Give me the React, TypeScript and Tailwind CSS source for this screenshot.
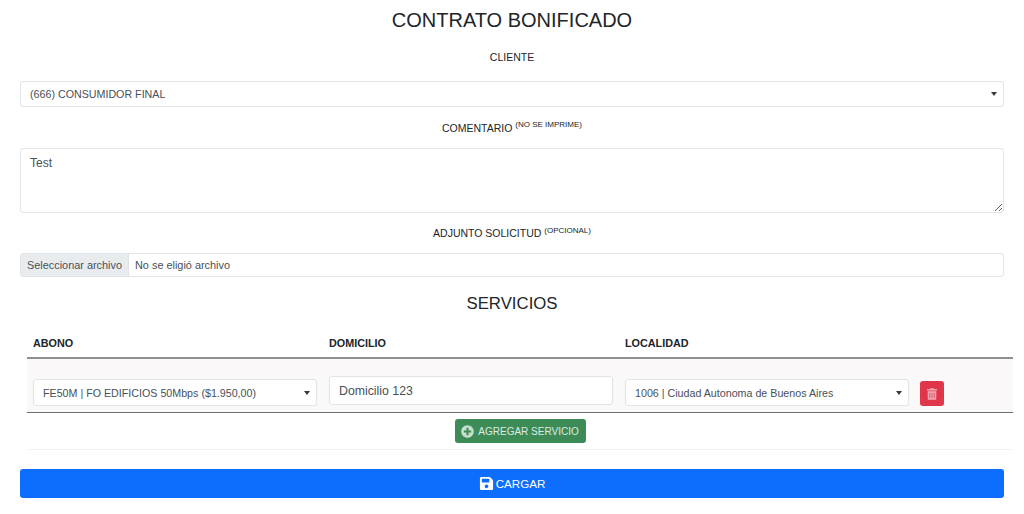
import { FC, ReactNode } from "react";
import { FaPlusCircle, FaSave, FaTrashAlt } from "react-icons/fa";

const SelectBox: FC<{ text: string; className: string }> = ({ text, className }) => (
  <div
    className={`flex items-center justify-between bg-white border border-[#e0e4e8] rounded-[3px] pl-[9px] pr-[6px] text-[10.7px] text-[#495057] ${className}`}
  >
    <span className="pt-[1px]">{text}</span>
    <svg width="6" height="4" viewBox="0 0 6 4" className="shrink-0">
      <path d="M0 0h6L3 4z" fill="#343a40" />
    </svg>
  </div>
);

const FieldLabel: FC<{ className: string; children: ReactNode }> = ({ className, children }) => (
  <div className={`flex items-center justify-center pt-[2px] text-[10.5px] text-[#212529] ${className}`}>
    <span>{children}</span>
  </div>
);

const Hint: FC<{ children: ReactNode }> = ({ children }) => (
  <sup className="relative top-0 align-super text-[8px]">{children}</sup>
);

export default function App() {
  return (
    <div className="w-[1024px] h-[514px] overflow-hidden bg-white px-[20px] text-[#212529] font-['Liberation_Sans',Arial,sans-serif]">
      <h1 className="h-[41px] flex items-center justify-center pb-[2px] text-[20px] text-[#212529]">
        CONTRATO BONIFICADO
      </h1>
      <FieldLabel className="h-[32px] mb-[8px]">CLIENTE</FieldLabel>
      <SelectBox text="(666) CONSUMIDOR FINAL" className="h-[26px]" />

      <FieldLabel className="h-[41px]">
        COMENTARIO <Hint>(NO SE IMPRIME)</Hint>
      </FieldLabel>
      <textarea
        defaultValue="Test"
        className="block w-full h-[65px] border border-[#e0e4e8] rounded-[3px] px-[9px] py-[5px] text-[12px] text-[#495057] outline-none"
      />

      <FieldLabel className="h-[40px]">
        ADJUNTO SOLICITUD <Hint>(OPCIONAL)</Hint>
      </FieldLabel>
      <div className="flex h-[24px] border border-[#e0e4e8] rounded-[3px] text-[10.9px] text-[#495057] overflow-hidden">
        <div className="w-[108px] flex items-center justify-center pt-[1px] bg-[#e9ecef] border-r border-[#e0e4e8]">
          Seleccionar archivo
        </div>
        <div className="flex items-center pt-[1px] pl-[6px]">No se eligió archivo</div>
      </div>

      <h2 className="h-[52px] flex items-center justify-center pt-[2px] text-[16.8px] text-[#212529]">
        SERVICIOS
      </h2>

      <div className="ml-[7px] mr-[-9px]">
        <div className="grid grid-cols-[296px_296px_1fr] h-[30px] items-center px-[6px] text-[10.8px] font-bold text-[#212529] border-b-2 border-[#8f8f8f]">
          <div>ABONO</div>
          <div>DOMICILIO</div>
          <div>LOCALIDAD</div>
        </div>
        <div className="grid grid-cols-[296px_296px_1fr] h-[54px] bg-[#faf8f9] px-[6px] border-b border-[#6e6e6e]">
          <div className="pt-[20px]">
            <SelectBox text="FE50M | FO EDIFICIOS 50Mbps ($1.950,00)" className="h-[27px] w-[284px]" />
          </div>
          <div className="pt-[17px]">
            <input
              defaultValue="Domicilio 123"
              className="block h-[29px] w-[284px] border border-[#e0e4e8] rounded-[3px] bg-white px-[9px] text-[12.3px] text-[#495057] outline-none"
            />
          </div>
          <div className="flex items-start gap-[11px] pt-[20px]">
            <SelectBox text="1006 | Ciudad Autonoma de Buenos Aires" className="h-[27px] w-[284px]" />
            <button className="mt-[2px] w-[24px] h-[25px] flex items-center justify-center rounded-[3px] bg-[#e0364c]">
              <FaTrashAlt className="w-[10px] h-[12px] text-[#f3a9b4]" />
            </button>
          </div>
        </div>
        <div className="h-[37px] flex items-start justify-center pt-[6px] border-b border-[#f2f2f2]">
          <button className="w-[131px] h-[24px] flex items-center justify-center gap-[4px] rounded-[3px] bg-[#3d8b57] text-[10px] text-[#dcebe1]">
            <FaPlusCircle className="w-[13px] h-[13px] text-[#c5dfcd]" />
            AGREGAR SERVICIO
          </button>
        </div>
      </div>

      <button className="mt-[19px] w-full h-[29px] flex items-center justify-center gap-[2px] rounded-[3px] bg-[#0d6efd] text-[11.6px] text-white">
        <FaSave className="w-[15px] h-[15px]" />
        CARGAR
      </button>
    </div>
  );
}
